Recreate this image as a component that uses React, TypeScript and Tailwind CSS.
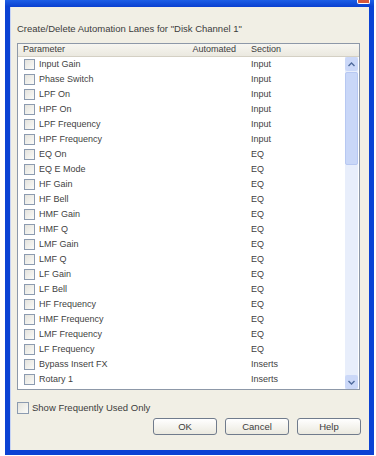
import React from "react";

type Row = { name: string; section: string };

const rows: Row[] = [
  { name: "Input Gain", section: "Input" },
  { name: "Phase Switch", section: "Input" },
  { name: "LPF On", section: "Input" },
  { name: "HPF On", section: "Input" },
  { name: "LPF Frequency", section: "Input" },
  { name: "HPF Frequency", section: "Input" },
  { name: "EQ On", section: "EQ" },
  { name: "EQ E Mode", section: "EQ" },
  { name: "HF Gain", section: "EQ" },
  { name: "HF Bell", section: "EQ" },
  { name: "HMF Gain", section: "EQ" },
  { name: "HMF Q", section: "EQ" },
  { name: "LMF Gain", section: "EQ" },
  { name: "LMF Q", section: "EQ" },
  { name: "LF Gain", section: "EQ" },
  { name: "LF Bell", section: "EQ" },
  { name: "HF Frequency", section: "EQ" },
  { name: "HMF Frequency", section: "EQ" },
  { name: "LMF Frequency", section: "EQ" },
  { name: "LF Frequency", section: "EQ" },
  { name: "Bypass Insert FX", section: "Inserts" },
  { name: "Rotary 1", section: "Inserts" },
];

function Checkbox({ size = "w-[11px] h-[11px]" }: { size?: string }) {
  return (
    <span
      className={`${size} shrink-0 border border-[#8c9bb0] bg-gradient-to-br from-[#e4e3dd] to-[#fbfbf8]`}
    />
  );
}

function Button({ label }: { label: string }) {
  return (
    <button className="w-[64px] h-[17px] rounded-[3px] border border-[#707b8c] bg-gradient-to-b from-white to-[#ebe9df] text-[9.5px] leading-none text-[#3c3c3c]">
      {label}
    </button>
  );
}

export default function App() {
  return (
    <div
      className="w-[376px] h-[456px] bg-white overflow-hidden"
      style={{ fontFamily: '"Liberation Sans", Arial, sans-serif' }}
    >
      <div className="ml-[5px] w-[369px] h-[455px] flex flex-col">
        {/* bottom strip of the title bar */}
        <div className="relative h-[7px] bg-gradient-to-b from-[#1d5ee6] to-[#0a3fd0]">
          <span className="absolute right-[4px] top-0 w-[13px] h-[4px] rounded-b-[2px] border-x border-b border-white bg-[#d8583a]" />
        </div>

        <div className="flex-1 flex flex-col border-x-[5px] border-b-[5px] border-[#0b42d4] bg-[#f1efe5]">
          <div className="flex-1 flex flex-col border-l border-[#c6d3f5]">
            <p className="mt-[16px] ml-[6px] text-[9.5px] leading-[12px] text-[#3c3c3c]">
              Create/Delete Automation Lanes for "Disk Channel 1"
            </p>

            <div className="mt-[8px] ml-[6px] w-[343px] h-[347px] border border-[#8d98a8] bg-white flex flex-col overflow-hidden">
              <div className="h-[13px] shrink-0 flex items-center border-b border-[#d4d0c4] bg-gradient-to-b from-[#f7f6f1] to-[#ebe9e0] text-[9px] text-[#3c3c3c]">
                <span className="pl-[5px] w-[173px]">Parameter</span>
                <span className="w-[45px] text-right">Automated</span>
                <span className="pl-[15px]">Section</span>
              </div>

              <div className="flex-1 flex overflow-hidden">
                <div className="flex-1 flex flex-col">
                  {rows.map((r) => (
                    <div
                      key={r.name}
                      className="h-[15px] shrink-0 flex items-center text-[9px] text-[#3f3f3f]"
                    >
                      <span className="w-[233px] flex items-center pl-[6px] gap-[4px]">
                        <Checkbox />
                        <span>{r.name}</span>
                      </span>
                      <span>{r.section}</span>
                    </div>
                  ))}
                  {/* next row, only its top edge shows */}
                  <div className="h-[15px] shrink-0 flex items-center pl-[6px]">
                    <span className="w-[11px] h-[11px] border border-[#7f93b8] bg-[#c9d6f3]" />
                  </div>
                </div>

                {/* scrollbar */}
                <div className="w-[13px] flex flex-col bg-[#e8eefb] mr-[1px]">
                  <div className="h-[14px] flex items-center justify-center rounded-[2px] bg-[#cbd8f8]">
                    <svg width="7" height="5" viewBox="0 0 7 5">
                      <path d="M0.5 4 L3.5 1 L6.5 4" fill="none" stroke="#4f6a9c" strokeWidth="1.4" />
                    </svg>
                  </div>
                  <div className="h-[93px] mt-[1px] rounded-[2px] border border-[#b7c8f2] bg-[#c9d7f8]" />
                  <div className="flex-1" />
                  <div className="h-[14px] flex items-center justify-center rounded-[2px] bg-[#cbd8f8]">
                    <svg width="7" height="5" viewBox="0 0 7 5">
                      <path d="M0.5 1 L3.5 4 L6.5 1" fill="none" stroke="#4f6a9c" strokeWidth="1.4" />
                    </svg>
                  </div>
                </div>
              </div>
            </div>

            <div className="mt-[11px] ml-[6px] flex items-center gap-[3px] text-[9.5px] text-[#3c3c3c]">
              <Checkbox size="w-[12px] h-[12px]" />
              <span>Show Frequently Used Only</span>
            </div>

            <div className="mt-[3px] flex justify-end gap-[8px] pr-[8px]">
              <Button label="OK" />
              <Button label="Cancel" />
              <Button label="Help" />
            </div>
          </div>
        </div>
      </div>
    </div>
  );
}
